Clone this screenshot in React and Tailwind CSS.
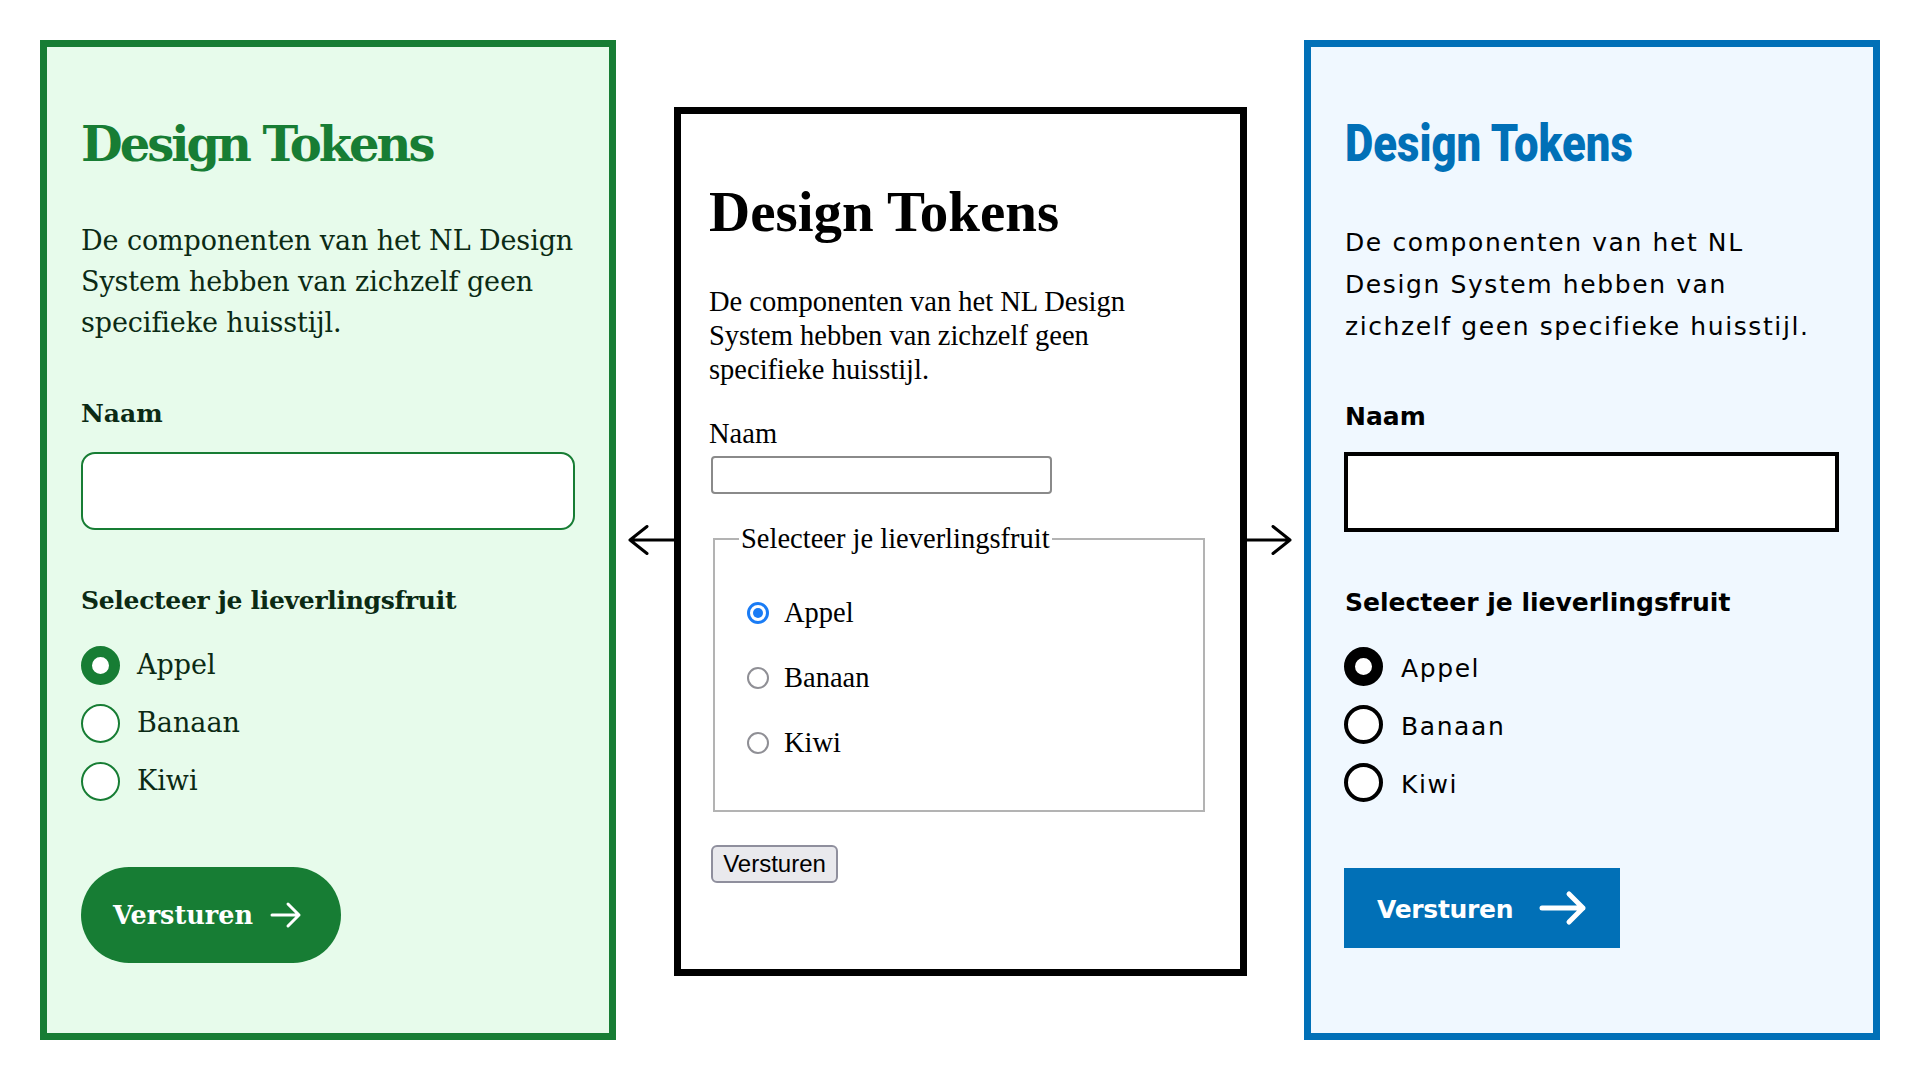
import React from "react";

function GreenPanel() {
  const fruits = ["Appel", "Banaan", "Kiwi"];
  return (
    <div className="w-[576px] h-[1000px] shrink-0 border-[7px] border-[#177d34] bg-[#e7fbeb] pl-[34px] pt-[70px] font-['DejaVu_Serif',serif] text-[#0b2a14]">
      <h1 className="text-[48px] leading-[54px] font-bold tracking-[-3px] text-[#177d34]">Design Tokens</h1>
      <p className="mt-[49px] text-[27px] leading-[41px] tracking-[-0.1px] whitespace-nowrap">
        De componenten van het NL Design
        <br />
        System hebben van zichzelf geen
        <br />
        specifieke huisstijl.
      </p>
      <label className="block mt-[56px] text-[25px] leading-[30px] font-bold">Naam</label>
      <div className="mt-[23px] w-[494px] h-[78px] rounded-[14px] border-2 border-[#177d34] bg-white" />
      <div className="mt-[56px] text-[25px] leading-[30px] font-bold tracking-[-0.3px]">Selecteer je lieverlingsfruit</div>
      <div className="mt-[29px] flex flex-col gap-[18px]">
        {fruits.map((f, i) => (
          <div key={f} className="h-[40px] flex items-center gap-[17px]">
            {i === 0 ? (
              <span className="w-[39px] h-[39px] shrink-0 rounded-full border-[11px] border-[#177d34] bg-white" />
            ) : (
              <span className="w-[39px] h-[39px] shrink-0 rounded-full border-2 border-[#177d34] bg-white" />
            )}
            <span className="text-[27px] leading-[40px]">{f}</span>
          </div>
        ))}
      </div>
      <button className="mt-[66px] w-[260px] h-[96px] rounded-full bg-[#177d34] text-white flex items-center pl-[32px] gap-[17px]">
        <span className="text-[25.5px] leading-[30px] font-bold">Versturen</span>
        <svg width="32" height="28" viewBox="0 0 32 28" fill="none">
          <path d="M2 14 H29 M18 3 L29 14 L18 25" stroke="white" strokeWidth="3" strokeLinecap="round" strokeLinejoin="round" />
        </svg>
      </button>
    </div>
  );
}

function PlainPanel() {
  const fruits = ["Appel", "Banaan", "Kiwi"];
  return (
    <div className="self-start mt-[67px] w-[573px] h-[869px] shrink-0 border-[7px] border-black bg-white pl-[28px] pt-[65px] font-['Liberation_Serif',serif] text-black">
      <h1 className="text-[57px] leading-[66px] font-bold">Design Tokens</h1>
      <p className="mt-[40px] text-[28.5px] leading-[34px] whitespace-nowrap">
        De componenten van het NL Design
        <br />
        System hebben van zichzelf geen
        <br />
        specifieke huisstijl.
      </p>
      <label className="block mt-[30px] text-[28.5px] leading-[34px]">Naam</label>
      <div className="mt-[5px] ml-[2px] w-[341px] h-[38px] rounded-[4px] border-2 border-[#8a8a8a] bg-white" />
      <fieldset className="mt-[28px] ml-[4px] w-[492px] border-2 border-[#b3b3b3] pl-[24px] pb-[50px]">
        <legend className="px-[2px] text-[28.5px] leading-[34px]">Selecteer je lieverlingsfruit</legend>
        <div className="mt-[40px] pl-[8px] flex flex-col gap-[31px]">
          {fruits.map((f, i) => (
            <div key={f} className="h-[34px] flex items-center gap-[15px]">
              {i === 0 ? (
                <span className="w-[22px] h-[22px] shrink-0 rounded-full border-[3px] border-[#1a7cf5] bg-white flex items-center justify-center">
                  <span className="w-[10px] h-[10px] rounded-full bg-[#1a7cf5]" />
                </span>
              ) : (
                <span className="w-[22px] h-[22px] shrink-0 rounded-full border-2 border-[#8f8f95] bg-white" />
              )}
              <span className="text-[28.5px] leading-[34px]">{f}</span>
            </div>
          ))}
        </div>
      </fieldset>
      <button className="mt-[33px] ml-[2px] w-[127px] h-[38px] rounded-[6px] border-2 border-[#8f8f9d] bg-[#e9e9ed] font-['Liberation_Sans',sans-serif] text-[24px] leading-[30px] text-black flex items-center justify-center">
        Versturen
      </button>
    </div>
  );
}

function BluePanel() {
  const fruits = ["Appel", "Banaan", "Kiwi"];
  return (
    <div className="w-[576px] h-[1000px] shrink-0 border-[7px] border-[#0170b7] bg-[#f0f8ff] pl-[34px] pt-[67px] font-['DejaVu_Sans',sans-serif] text-black">
      <h1 className="font-['Roboto',sans-serif] font-black text-[52px] leading-[60px] text-[#0170b7] whitespace-nowrap">
        <span className="inline-block origin-left scale-x-[0.84]">Design Tokens</span>
      </h1>
      <p className="mt-[48px] text-[25px] leading-[42px] tracking-[1.6px] whitespace-nowrap">
        De componenten van het NL
        <br />
        Design System hebben van
        <br />
        zichzelf geen specifieke huisstijl.
      </p>
      <label className="block mt-[54px] text-[25px] leading-[30px] font-bold">Naam</label>
      <div className="mt-[20px] -ml-[1px] w-[495px] h-[80px] border-4 border-black bg-white" />
      <div className="mt-[56px] text-[25px] leading-[30px] font-bold">Selecteer je lieverlingsfruit</div>
      <div className="mt-[28px] -ml-[1px] flex flex-col gap-[18px]">
        {fruits.map((f, i) => (
          <div key={f} className="h-[40px] flex items-center gap-[18px]">
            {i === 0 ? (
              <span className="w-[39px] h-[39px] shrink-0 rounded-full border-[11px] border-black bg-white" />
            ) : (
              <span className="w-[39px] h-[39px] shrink-0 rounded-full border-4 border-black bg-white" />
            )}
            <span className="text-[25px] leading-[40px] pt-[6px] tracking-[1.6px]">{f}</span>
          </div>
        ))}
      </div>
      <button className="mt-[66px] -ml-[1px] w-[276px] h-[80px] bg-[#0170b7] text-white flex items-center pl-[33px] gap-[26px]">
        <span className="text-[25px] leading-[30px] pt-[4px] font-bold tracking-[-0.3px]">Versturen</span>
        <svg width="48" height="36" viewBox="0 0 48 36" fill="none">
          <path d="M3 18 H44 M30 4 L44 18 L30 32" stroke="white" strokeWidth="5" strokeLinecap="round" strokeLinejoin="round" />
        </svg>
      </button>
    </div>
  );
}

export default function App() {
  return (
    <div className="w-[1920px] h-[1080px] bg-white pt-[40px] px-[40px] overflow-hidden">
      <div className="flex h-[1000px]">
        <GreenPanel />
        <div className="w-[58px] shrink-0 flex items-center">
          <svg width="58" height="30" viewBox="0 0 58 30" fill="none">
            <path d="M14 15 H58 M31 1.5 L14 15 L31 28.5" stroke="black" strokeWidth="3" strokeLinecap="round" strokeLinejoin="round" />
          </svg>
        </div>
        <PlainPanel />
        <div className="w-[57px] shrink-0 flex items-center">
          <svg width="57" height="30" viewBox="0 0 57 30" fill="none">
            <path d="M0 15 H43 M26 1.5 L43 15 L26 28.5" stroke="black" strokeWidth="3" strokeLinecap="round" strokeLinejoin="round" />
          </svg>
        </div>
        <BluePanel />
      </div>
    </div>
  );
}
